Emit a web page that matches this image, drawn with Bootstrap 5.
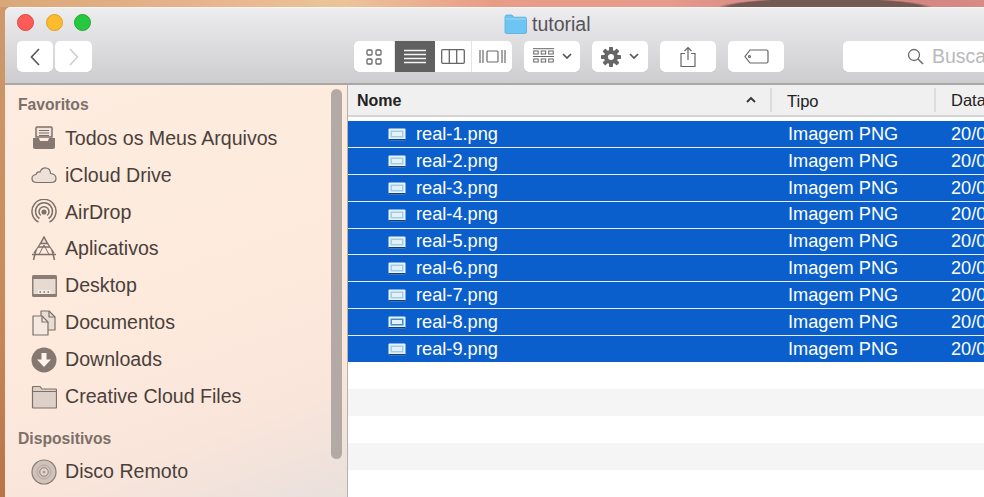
<!DOCTYPE html>
<html lang="pt-BR">
<head>
<meta charset="utf-8">
<title>tutorial</title>
<link rel="stylesheet" href="https://cdn.jsdelivr.net/npm/bootstrap@5.3.0/dist/css/bootstrap.min.css">
<style>
html,body{height:100%;margin:0;overflow:hidden}
body{font-family:"Liberation Sans",Arial,sans-serif;background:linear-gradient(180deg,#cf9a6c 0,#c98a5a 60%,#b9744a 100%);width:984px;height:497px}
.top-strip{height:7px;background:radial-gradient(ellipse 108px 10px at 825px 8px,#755a54 0,#755a54 90%,transparent 100%),linear-gradient(90deg,#d9a878 0,#e8b38c 20%,#ecc49a 35%,#e89c88 50%,#e59a8c 68%,#cf7f80 85%,#d98a84 100%)}
.mac-win{margin-left:5px;height:490px;border-top-left-radius:6px;overflow:hidden;background:#fff}
.tool-area{height:78px;flex:none;background:linear-gradient(180deg,#eeedef 0,#e3e2e4 30%,#cdccce 100%);border-top:1px solid #f7f7f7;border-bottom:2px solid #a9a7a8;position:relative}
.lights{padding:6px 0 0 12px;height:33px;gap:11.5px}
.lamp{width:17px;height:17px;border-radius:50%;flex:none}
.lamp-r{background:#fc5b57;border:1px solid #e2463f}
.lamp-y{background:#fdbb2e;border:1px solid #dfa023}
.lamp-g{background:#27c83f;border:1px solid #1dab2c}
.win-title{left:499px;top:5px;gap:5px;font-size:19.5px;color:#56535a;line-height:22px}
.tool-row{padding-left:12px;height:31px;width:979px;overflow:hidden}
.tool-row>*{flex:none}
.tbtn{height:31px;background:#fff;border:0;border-radius:5px;padding:0;box-shadow:0 1px 0 #bdbcbe;color:#5b5b5b}
.tbtn:hover,.tbtn:active{background:#fff}
.back-b{width:36px;margin-right:2px}
.fwd-b{width:37px;margin-right:262px}
.seg{width:158px;height:31px;background:#fff;border-radius:5px;box-shadow:0 1px 0 #bdbcbe;overflow:hidden;margin-right:12px}
.seg-i{height:31px;border-right:1px solid #e4e4e4;flex:none}
.seg-on{background:#606060;border-right:0}
.w41{width:41px}.w40{width:40px}.w37{width:37px}
.w56{width:56px;margin-right:12px}
.w57{width:56px;margin-right:59px}
.search-b{width:160px;padding-left:64px;gap:8px;font-size:19.5px;color:#b9b9bb;font-weight:400}
.body-area{height:410px;min-height:0}
.side{width:343px;flex:none;background:linear-gradient(160deg,#fdecdf 0,#fdeadd 55%,#f9e5da 80%,#e9e0dd 100%);border-right:1px solid #b7b1ae;position:relative;padding-top:10px;overflow:hidden}
.side-h{font-size:15.7px;font-weight:700;color:#7c706a;padding-left:13px;line-height:20px;height:20px}
.side-h2{margin-top:13.500px}
.side-list{margin:5px 0 0;padding:0;list-style:none}
.side-i{height:36.9px;padding-left:26px;gap:8px;font-size:19.6px;color:#4a3f3b;white-space:nowrap}
.side-i svg{flex:none}
.side-bar{position:absolute;left:326px;top:4px;width:11px;height:370px;border-radius:6px;background:#b4aaa5}
.files{flex:1;min-width:0;background:#fff;overflow:hidden}
.head-row{height:32px;background:#f0f0f0;border-bottom:2px solid #d4d4d4;font-size:16.5px;color:#222;position:relative}
.col-nome{width:424px;flex:none;padding-left:9px;position:relative;font-weight:700;font-size:16px;height:24px;line-height:26px;border-right:2px solid #dcdcdc}
.col-tipo{width:164px;flex:none;padding-left:15px;height:24px;line-height:26px;border-right:2px solid #dcdcdc;font-weight:400}
.col-data{padding-left:15px;white-space:nowrap;line-height:26px}
.sort-up{position:absolute;right:14px;top:8px}
.gap-w{height:4px;background:#fff}
.frow{height:26.9px;background:#0a5fcd;border-bottom:1.5px solid #e6effa;color:#fff;font-size:18.2px;white-space:nowrap;padding-top:1px}
.frow:last-child{border-bottom:0;height:25.5px}
.f-nome{width:424px;flex:none;padding-left:40px;gap:10px}
.f-tipo{width:164px;flex:none;padding-left:16px}
.f-data{padding-left:15px}
.zeb{height:27px}
.zeb-w{background:#fff}
.zeb-g{background:#f5f5f5}
</style>
</head>
<body>
<div class="top-strip"></div>
<div class="mac-win d-flex flex-column">
  <div class="tool-area">
    <div class="lights d-flex"><span class="lamp lamp-r"></span><span class="lamp lamp-y"></span><span class="lamp lamp-g"></span></div>
    <div class="win-title position-absolute d-flex align-items-center">
      <svg width="23" height="20" viewBox="0 0 23 20"><path d="M1 3.2Q1 1 3 1H8L10 3.2H21Q22.500 3.200 22.500 5V18Q22.500 19.500 21 19.500H2.500Q1 19.500 1 18Z" fill="#6cc5f2" stroke="#58acd8" stroke-width=".8"/><path d="M1.300 5H22.200" stroke="#9adaf8" stroke-width="1"/></svg>
      <span>tutorial</span>
    </div>
    <div class="tool-row d-flex align-items-center">
      <button class="btn tbtn back-b d-flex align-items-center justify-content-center" aria-label="Voltar"><svg width="12" height="20" viewBox="0 0 12 20"><path d="M10 2 2.500 10 10 18" fill="none" stroke="#5a5a5a" stroke-width="1.700"/></svg></button>
      <button class="btn tbtn fwd-b d-flex align-items-center justify-content-center" aria-label="Avançar"><svg width="12" height="20" viewBox="0 0 12 20"><path d="M2 2 9.500 10 2 18" fill="none" stroke="#cfcfcf" stroke-width="1.700"/></svg></button>
      <div class="seg d-flex">
        <div class="seg-i w41 d-flex align-items-center justify-content-center"><svg width="16" height="16" viewBox="0 0 16 16" fill="none" stroke="#6a6a6a" stroke-width="1.300"><rect x="1" y="1" width="5" height="5" rx="1"/><rect x="10" y="1" width="5" height="5" rx="1"/><rect x="1" y="10" width="5" height="5" rx="1"/><rect x="10" y="10" width="5" height="5" rx="1"/></svg></div>
        <div class="seg-i seg-on w40 d-flex align-items-center justify-content-center"><svg width="22" height="16" viewBox="0 0 22 16" stroke="#f4f4f4" stroke-width="1.400"><path d="M0 1.500H22M0 5.500H22M0 9.500H22M0 13.500H22"/></svg></div>
        <div class="seg-i w37 d-flex align-items-center justify-content-center"><svg width="24" height="15" viewBox="0 0 24 15" fill="none" stroke="#666" stroke-width="1.300"><rect x=".7" y=".7" width="22.600" height="13.600" rx="1"/><path d="M8.300 .7V14.300M15.700 .7V14.300"/></svg></div>
        <div class="seg-i w40 border-0 d-flex align-items-center justify-content-center"><svg width="27" height="15" viewBox="0 0 27 15" fill="none" stroke="#6a6a6a" stroke-width="1.200"><rect x="8" y="2" width="11" height="11" rx="1"/><path d="M1 1V14M4 1V14M23 1V14M26 1V14"/></svg></div>
      </div>
      <button class="btn tbtn w56 d-flex align-items-center justify-content-center gap-2" aria-label="Organizar"><svg width="21" height="17" viewBox="0 0 21 17" fill="none" stroke="#666" stroke-width="1"><path d="M0 .7H21M0 8.500H21"/><rect x=".7" y="3" width="4.500" height="3"/><rect x="8.200" y="3" width="4.500" height="3"/><rect x="15.700" y="3" width="4.500" height="3"/><rect x=".7" y="11" width="4.500" height="3"/><rect x="8.200" y="11" width="4.500" height="3"/><rect x="15.700" y="11" width="4.500" height="3"/></svg><svg width="10" height="7" viewBox="0 0 10 7"><path d="M1 1 5 5 9 1" fill="none" stroke="#555" stroke-width="1.700"/></svg></button>
      <button class="btn tbtn w56 d-flex align-items-center justify-content-center gap-2" aria-label="Ação"><svg width="20" height="20" viewBox="0 0 20 20"><g fill="#666"><circle cx="10" cy="10" r="7"/><rect x="8" y="0" width="4" height="20" rx=".8"/><rect x="8" y="0" width="4" height="20" rx=".8" transform="rotate(45 10 10)"/><rect x="8" y="0" width="4" height="20" rx=".8" transform="rotate(90 10 10)"/><rect x="8" y="0" width="4" height="20" rx=".8" transform="rotate(135 10 10)"/></g><circle cx="10" cy="10" r="3" fill="#fff"/></svg><svg width="10" height="7" viewBox="0 0 10 7"><path d="M1 1 5 5 9 1" fill="none" stroke="#555" stroke-width="1.700"/></svg></button>
      <button class="btn tbtn w56 d-flex align-items-center justify-content-center" aria-label="Compartilhar"><svg width="16" height="22" viewBox="0 0 16 22" fill="none" stroke="#666" stroke-width="1.200"><path d="M5 7.500H1V20.500H15V7.500H11M8 14V1.500M4.500 5 8 1.500 11.500 5"/></svg></button>
      <button class="btn tbtn w57 d-flex align-items-center justify-content-center" aria-label="Etiqueta"><svg width="25" height="15" viewBox="0 0 25 15" fill="none" stroke="#666" stroke-width="1.200"><path d="M6 1H22.500Q24 1 24 2.500V12.500Q24 14 22.500 14H6L1 7.500Z"/><circle cx="5.500" cy="7.500" r="1"/></svg></button>
      <div class="tbtn search-b d-flex align-items-center"><svg width="17" height="17" viewBox="0 0 17 17" fill="none" stroke="#6d6d6d" stroke-width="1.300"><circle cx="7" cy="7" r="5.500"/><path d="M11 11 16 16" stroke-width="1.600"/></svg><span>Buscar</span></div>
    </div>
  </div>
  <div class="body-area d-flex flex-grow-1">
    <aside class="side">
      <div class="side-h">Favoritos</div>
      <ul class="side-list">
        <li class="side-i d-flex align-items-center"><svg width="26" height="26" viewBox="0 0 26 26"><path d="M6 2H20Q21 2 21 3V12H5V3Q5 2 6 2Z" fill="#efe2d8" stroke="#7d706a" stroke-width="1.500"/><path d="M8 5.500H18M8 8H18M8 10.500H18" stroke="#7d706a" stroke-width="1.200"/><path d="M2 13H8L9 16H17L18 13H24V22Q24 24 22 24H4Q2 24 2 22Z" fill="#857871"/></svg><span>Todos os Meus Arquivos</span></li>
        <li class="side-i d-flex align-items-center"><svg width="26" height="26" viewBox="0 0 26 26"><path d="M6 20.500Q1 20.500 1 16.500Q1 13 5 12.500Q6 9.500 9 10Q11 5.500 15 6Q19.500 6.500 19.500 11.500Q25 12 25 16.500Q25 20.500 20 20.500Z" fill="#ece0d8" stroke="#7d706a" stroke-width="1.200"/></svg><span>iCloud Drive</span></li>
        <li class="side-i d-flex align-items-center"><svg width="26" height="26" viewBox="0 0 26 26" fill="none" stroke="#7d706a" stroke-width="1.500"><path d="M7.500 23A12 12 0 1 1 18.500 23"/><path d="M8.500 19.500A8.500 8.500 0 1 1 17.500 19.500"/><path d="M9.800 16.500A5 5 0 1 1 16.200 16.500"/><circle cx="13" cy="13" r="1.800" fill="#7d706a"/><path d="M9 24 13 16 17 24" fill="#fdeadd" stroke="none"/></svg><span>AirDrop</span></li>
        <li class="side-i d-flex align-items-center"><svg width="26" height="26" viewBox="0 0 26 26" fill="none" stroke="#7d706a" stroke-width="1.500"><path d="M13 1 9.500 7.500 13 7.500 16.500 7.500Z" fill="#e9dcd3"/><path d="M9.500 7.500 3 17M16.500 7.500 23 17M7 11H19" stroke-width="1.300"/><path d="M5 14 2.500 24M21 14 23.500 24M1 18.500H25"/><path d="M8 18.500 13 9 18 18.500" stroke-width="1"/></svg><span>Aplicativos</span></li>
        <li class="side-i d-flex align-items-center"><svg width="26" height="26" viewBox="0 0 26 26"><rect x="1" y="2" width="25" height="22" rx="1.500" fill="#8a7d76"/><rect x="2.500" y="6" width="22" height="15" fill="#e7dad1"/><rect x="7" y="17" width="13" height="4" fill="#f5ece6"/><path d="M8.500 19H10M12.500 19H14M16.500 19H18" stroke="#7d706a" stroke-width="1.300"/></svg><span>Desktop</span></li>
        <li class="side-i d-flex align-items-center"><svg width="26" height="26" viewBox="0 0 26 26" stroke="#7d706a" stroke-width="1.200" stroke-linejoin="round"><path d="M10 6V1H18L24 7V20H17" fill="#e9dcd3"/><path d="M18 1V7H24" fill="none"/><path d="M2 6H11L17 12V25H2Z" fill="#f4e9e1"/><path d="M11 6V12H17" fill="none"/></svg><span>Documentos</span></li>
        <li class="side-i d-flex align-items-center"><svg width="26" height="26" viewBox="0 0 26 26"><circle cx="13" cy="13" r="12.500" fill="#857871"/><path d="M10.500 6H15.500V12.500H20L13 20 6 12.500H10.500Z" fill="#fdf3ec"/></svg><span>Downloads</span></li>
        <li class="side-i d-flex align-items-center"><svg width="26" height="26" viewBox="0 0 26 26"><path d="M1.500 3.500Q1.500 2.500 2.500 2.500H9L11 5H24.500Q25.500 5 25.500 6V23Q25.500 24 24.500 24H2.500Q1.500 24 1.500 23Z" fill="#ddd0c8" stroke="#7d706a" stroke-width="1.200"/><path d="M2 7.500H25" stroke="#7d706a"/></svg><span>Creative Cloud Files</span></li>
      </ul>
      <div class="side-h side-h2">Dispositivos</div>
      <ul class="side-list">
        <li class="side-i d-flex align-items-center"><svg width="26" height="26" viewBox="0 0 26 26"><circle cx="13" cy="13" r="12" fill="#cfc3bc" stroke="#8a7d76" stroke-width="1.200"/><circle cx="13" cy="13" r="7" fill="none" stroke="#b3a79f"/><circle cx="13" cy="13" r="4.200" fill="#e5d9d1" stroke="#8a7d76"/><circle cx="13" cy="13" r="1.500" fill="#a89c95"/></svg><span>Disco Remoto</span></li>
      </ul>
      <div class="side-bar"></div>
    </aside>
    <main class="files">
      <div class="head-row d-flex align-items-center">
        <div class="col-nome">Nome<svg class="sort-up" width="10" height="7" viewBox="0 0 10 7"><path d="M1 6 5 2 9 6" fill="none" stroke="#333" stroke-width="1.800"/></svg></div>
        <div class="col-tipo">Tipo</div>
        <div class="col-data">Data</div>
      </div>
      <div class="gap-w"></div>
      <div id="rows"></div>
      <div class="zeb zeb-w"></div><div class="zeb zeb-g"></div><div class="zeb zeb-w"></div><div class="zeb zeb-g"></div><div class="zeb zeb-w"></div>
    </main>
  </div>
</div>
<script>
var h='';
for(var i=1;i<=9;i++){
h+='<div class="frow d-flex align-items-center"><div class="f-nome d-flex align-items-center"><svg width="18" height="13" viewBox="0 0 18 13"><rect x=".5" y=".5" width="17" height="12" rx="1" fill="#eaf3fb"/><rect y="11" x=".5" width="17" height="1.500" fill="#0b3f8a"/><rect x="2.500" y="2.500" width="13" height="7" fill="'+(i==8?'#3f8fc9':'#9fcde6')+'"/><rect x="4" y="4" width="10" height="4" fill="#e4f2f8"/></svg><span>real-'+i+'.png</span></div><div class="f-tipo">Imagem PNG</div><div class="f-data">20/0</div></div>';
}
document.getElementById('rows').innerHTML=h;
</script>
<script src="https://cdn.jsdelivr.net/npm/bootstrap@5.3.0/dist/js/bootstrap.bundle.min.js"></script>
</body>
</html>
